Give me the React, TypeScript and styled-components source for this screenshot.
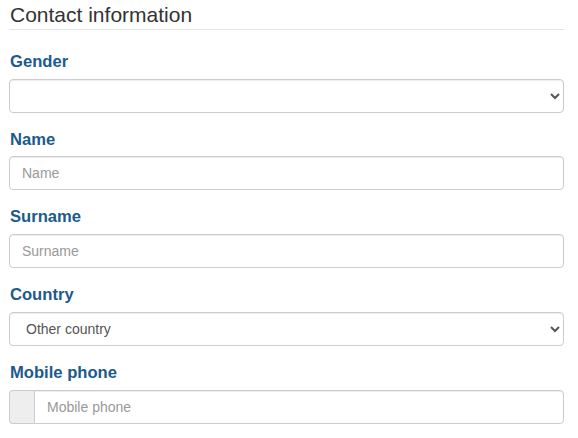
import styled, { createGlobalStyle } from 'styled-components';

const GlobalStyle = createGlobalStyle`
  * {
    box-sizing: border-box;
  }
  body {
    margin: 0;
    background: #fff;
    font-family: "Liberation Sans", Arial, sans-serif;
    font-size: 14px;
    line-height: 1.42857;
    color: #333;
  }
`;

const Form = styled.form`
  padding: 3px 14px 0 9px;
`;

const Fieldset = styled.fieldset`
  margin: 0;
  padding: 0;
  border: 0;
  min-width: 0;
`;

const Legend = styled.legend`
  display: block;
  width: 100%;
  padding: 0 0 2px 1px;
  margin-bottom: 20px;
  font-size: 21px;
  line-height: 24px;
  color: #333;
  border-bottom: 1px solid #e5e5e5;
`;

const FormGroup = styled.div`
  margin-bottom: 15px;
`;

const Label = styled.label`
  display: block;
  margin-bottom: 5px;
  padding-left: 1px;
  font-size: 16.6px;
  font-weight: bold;
  line-height: 1.42857;
  color: #205a8c;
`;

const controlStyle = `
  display: block;
  width: 100%;
  height: 34px;
  padding: 6px 12px;
  font-family: "Liberation Sans", Arial, sans-serif;
  font-size: 14px;
  line-height: 1.42857;
  color: #555;
  background-color: #fff;
  border: 1px solid #ccc;
  border-radius: 4px;
  box-shadow: inset 0 1px 1px rgba(0, 0, 0, 0.075);
  outline: none;
  &::placeholder {
    color: #999;
  }
`;

const Input = styled.input`
  ${controlStyle}
`;

const Select = styled.select`
  ${controlStyle}
`;

const InputGroup = styled.div`
  display: flex;
  width: 100%;
`;

const Addon = styled.span`
  width: 25px;
  height: 34px;
  flex: none;
  background-color: #eee;
  border: 1px solid #ccc;
  border-right: 0;
  border-radius: 4px 0 0 4px;
`;

const GroupInput = styled(Input)`
  flex: 1;
  border-radius: 0 4px 4px 0;
`;

export default function App() {
  return (
    <>
      <GlobalStyle />
      <Form>
        <Fieldset>
          <Legend>Contact information</Legend>
          <FormGroup>
            <Label htmlFor="gender">Gender</Label>
            <Select id="gender" defaultValue="">
              <option value=""></option>
              <option value="m">Male</option>
              <option value="f">Female</option>
            </Select>
          </FormGroup>
          <FormGroup>
            <Label htmlFor="name">Name</Label>
            <Input id="name" type="text" placeholder="Name" />
          </FormGroup>
          <FormGroup>
            <Label htmlFor="surname">Surname</Label>
            <Input id="surname" type="text" placeholder="Surname" />
          </FormGroup>
          <FormGroup>
            <Label htmlFor="country">Country</Label>
            <Select id="country" defaultValue="other">
              <option value="other">Other country</option>
            </Select>
          </FormGroup>
          <FormGroup>
            <Label htmlFor="mobile">Mobile phone</Label>
            <InputGroup>
              <Addon />
              <GroupInput id="mobile" type="tel" placeholder="Mobile phone" />
            </InputGroup>
          </FormGroup>
        </Fieldset>
      </Form>
    </>
  );
}
